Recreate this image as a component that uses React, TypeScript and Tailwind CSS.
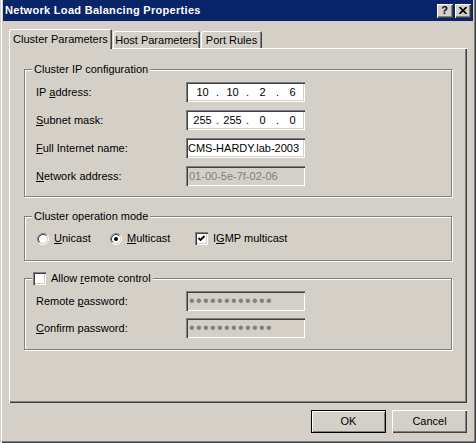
import type { ReactNode } from "react";

const raised =
  "shadow-[inset_1px_1px_#ffffff,inset_-1px_-1px_#404040,inset_-2px_-2px_#808080]";
const sunken =
  "shadow-[inset_1px_1px_#808080,inset_2px_2px_#404040,inset_-1px_-1px_#ffffff,inset_-2px_-2px_#d4d0c8]";

function GroupBox({
  legend,
  className,
  children,
}: {
  legend: ReactNode;
  className: string;
  children: ReactNode;
}) {
  return (
    <div
      className={`relative border border-[#808080] shadow-[inset_1px_1px_#ffffff,1px_1px_#ffffff] ${className}`}
    >
      <div className="absolute -top-[7px] left-[7px] flex h-[13px] items-center bg-[#d4d0c8] px-[2px]">
        {legend}
      </div>
      {children}
    </div>
  );
}

function Radio({ checked }: { checked?: boolean }) {
  return (
    <svg width="12" height="12" viewBox="0 0 12 12" className="shrink-0">
      <circle cx="6" cy="6" r="4.5" fill="#ffffff" />
      <path d="M2.11 9.89 A5.5 5.5 0 0 1 9.89 2.11" fill="none" stroke="#808080" />
      <path d="M2.82 9.18 A4.5 4.5 0 0 1 9.18 2.82" fill="none" stroke="#404040" />
      <path d="M9.89 2.11 A5.5 5.5 0 0 1 2.11 9.89" fill="none" stroke="#ffffff" />
      <path d="M9.18 2.82 A4.5 4.5 0 0 1 2.82 9.18" fill="none" stroke="#d4d0c8" />
      {checked ? <circle cx="6" cy="6" r="2" fill="#000000" /> : null}
    </svg>
  );
}

function Checkbox({ checked }: { checked?: boolean }) {
  return (
    <div className={`flex h-[13px] w-[13px] shrink-0 items-center justify-center bg-white ${sunken}`}>
      {checked ? (
        <svg width="9" height="9" viewBox="0 0 9 9">
          <path d="M1.5 4 L3.5 6 L7.5 2" fill="none" stroke="#000000" strokeWidth="1.8" />
        </svg>
      ) : null}
    </div>
  );
}

function Row({ label, children }: { label: ReactNode; children: ReactNode }) {
  return (
    <div className="flex h-[20px] items-center">
      <div className="w-[150px]">{label}</div>
      {children}
    </div>
  );
}

function IpBox({ parts }: { parts: string[] }) {
  return (
    <div className={`flex h-[20px] w-[119px] items-center bg-white pl-[4px] ${sunken}`}>
      {parts.map((part, i) => (
        <div key={i} className="flex">
          {i > 0 ? <span className="w-[5px] text-center">.</span> : null}
          <span className="w-[25px] text-center">{part}</span>
        </div>
      ))}
    </div>
  );
}

function PasswordBox() {
  return (
    <div className={`flex h-[20px] w-[119px] items-center bg-[#d4d0c8] pl-[3px] text-[16px] tracking-[1.4px] text-[#808080] ${sunken}`}>
      ••••••••••••
    </div>
  );
}

function Tab({ label, active, width }: { label: string; active?: boolean; width: string }) {
  return (
    <div
      className={`flex items-center justify-center rounded-t-[2px] bg-[#d4d0c8] shadow-[inset_1px_1px_#ffffff,inset_-1px_0_#404040,inset_-2px_0_#808080] ${width} ${
        active ? "relative z-10 -mb-px h-[20px]" : "ml-[1px] h-[17px] pt-[2px]"
      }`}
    >
      {label}
    </div>
  );
}

export default function App() {
  return (
    <div className="flex h-[443px] w-[476px] flex-col bg-[#d4d0c8] px-[3px] font-['Liberation_Sans',Arial,sans-serif] text-[11px] leading-none text-black shadow-[inset_1px_0_#d4d0c8,inset_2px_0_#ffffff,inset_-1px_-1px_#404040,inset_-2px_-2px_#808080]">
      <div className="flex h-[21px] items-center bg-[#0a246a] px-[2px]">
        <span className="flex-1 text-[11px] font-bold tracking-[0.3px] text-white">
          Network Load Balancing Properties
        </span>
        <div className="flex gap-[2px]">
          <button
            type="button"
            className={`flex h-[14px] w-[16px] items-center justify-center bg-[#d4d0c8] pr-[1px] text-[11px] font-bold ${raised}`}
          >
            ?
          </button>
          <button
            type="button"
            className={`flex h-[14px] w-[16px] items-center justify-center bg-[#d4d0c8] pb-[1px] pr-[1px] ${raised}`}
          >
            <svg width="8" height="7" viewBox="0 0 8 7">
              <path d="M0.5 0 L7.5 7 M7.5 0 L0.5 7" stroke="#000000" strokeWidth="1.6" />
            </svg>
          </button>
        </div>
      </div>

      <div className="ml-[6px] mt-[8px] flex h-[19px] items-end">
        <Tab label="Cluster Parameters" active width="w-[103px]" />
        <Tab label="Host Parameters" width="w-[87px]" />
        <Tab label="Port Rules" width="w-[61px]" />
      </div>

      <div
        className={`ml-[6px] flex h-[355px] w-[458px] flex-col px-[15px] pt-[21px] ${raised}`}
      >
        <GroupBox legend="Cluster IP configuration" className="flex h-[128px] flex-col gap-[8px] pl-[11px] pt-[12px]">
          <Row label={<>IP <u>a</u>ddress:</>}>
            <IpBox parts={["10", "10", "2", "6"]} />
          </Row>
          <Row label={<><u>S</u>ubnet mask:</>}>
            <IpBox parts={["255", "255", "0", "0"]} />
          </Row>
          <Row label={<><u>F</u>ull Internet name:</>}>
            <div className={`flex h-[20px] w-[119px] items-center bg-white pl-[2px] ${sunken}`}>
              CMS-HARDY.lab-2003
            </div>
          </Row>
          <Row label={<><u>N</u>etwork address:</>}>
            <div className={`flex h-[20px] w-[119px] items-center bg-[#d4d0c8] pl-[3px] text-[#808080] ${sunken}`}>
              01-00-5e-7f-02-06
            </div>
          </Row>
        </GroupBox>

        <GroupBox legend="Cluster operation mode" className="mt-[19px] flex h-[45px] items-start pl-[12px] pt-[15px]">
          <div className="flex h-[13px] w-[73px] items-center gap-[5px]">
            <Radio />
            <span><u>U</u>nicast</span>
          </div>
          <div className="flex h-[13px] w-[85px] items-center gap-[5px]">
            <Radio checked />
            <span><u>M</u>ulticast</span>
          </div>
          <div className="flex h-[13px] items-center gap-[5px]">
            <Checkbox checked />
            <span>I<u>G</u>MP multicast</span>
          </div>
        </GroupBox>

        <GroupBox
          legend={
            <div className="-ml-[1px] flex items-center gap-[5px]">
              <Checkbox />
              <span>Allow <u>r</u>emote control</span>
            </div>
          }
          className="mt-[17px] flex h-[72px] flex-col gap-[7px] pl-[11px] pt-[12px]"
        >
          <Row label={<>Remote <u>p</u>assword:</>}>
            <PasswordBox />
          </Row>
          <Row label={<><u>C</u>onfirm password:</>}>
            <PasswordBox />
          </Row>
        </GroupBox>
      </div>

      <div className="ml-[6px] mt-[7px] flex w-[458px] justify-end gap-[6px]">
        <button
          type="button"
          className="h-[23px] w-[75px] border border-black bg-[#d4d0c8] shadow-[inset_1px_1px_#ffffff,inset_-1px_-1px_#808080]"
        >
          OK
        </button>
        <button type="button" className={`h-[23px] w-[75px] bg-[#d4d0c8] ${raised}`}>
          Cancel
        </button>
      </div>
    </div>
  );
}
